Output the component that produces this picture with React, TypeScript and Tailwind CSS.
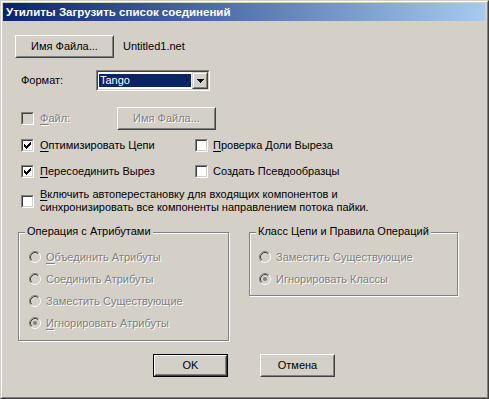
import React from "react";

const FACE = "bg-[#d4d0c8]";

function Btn({
  children,
  w,
  def,
  disabled,
}: {
  children: React.ReactNode;
  w: string;
  def?: boolean;
  disabled?: boolean;
}) {
  const inner = (
    <div className="h-full w-full border border-t-white border-l-white border-r-[#404040] border-b-[#404040]">
      <div className="h-full w-full border border-t-[#d4d0c8] border-l-[#d4d0c8] border-r-[#808080] border-b-[#808080] flex items-center justify-center">
        <span
          className={
            disabled
              ? "text-[#808080] [text-shadow:1px_1px_0_#ffffff] leading-[13px]"
              : "leading-[13px]"
          }
        >
          {children}
        </span>
      </div>
    </div>
  );
  if (def) {
    return (
      <div className={`${w} h-[23px] border border-black box-border`}>{inner}</div>
    );
  }
  return <div className={`${w} h-[23px]`}>{inner}</div>;
}

function Check({ checked, disabled }: { checked?: boolean; disabled?: boolean }) {
  return (
    <div className="w-[13px] h-[13px] shrink-0 border border-t-[#808080] border-l-[#808080] border-r-white border-b-white">
      <div
        className={`w-full h-full border border-t-[#404040] border-l-[#404040] border-r-[#d4d0c8] border-b-[#d4d0c8] ${
          disabled ? "bg-[#d4d0c8]" : "bg-white"
        } flex items-center justify-center`}
      >
        {checked && (
          <svg width="7" height="7" viewBox="0 0 7 7" shapeRendering="crispEdges">
            <path
              d="M0 2h1v3H0z M1 3h1v3H1z M2 4h1v3H2z M3 3h1v3H3z M4 2h1v3H4z M5 1h1v3H5z M6 0h1v3H6z"
              fill="#000"
            />
          </svg>
        )}
      </div>
    </div>
  );
}

function Radio({ checked }: { checked?: boolean }) {
  return (
    <svg width="12" height="12" viewBox="0 0 12 12" className="shrink-0">
      <circle cx="6" cy="6" r="4.5" fill="#d4d0c8" />
      <path d="M2.11 9.89 A5.5 5.5 0 0 1 9.89 2.11" stroke="#808080" fill="none" strokeWidth="1" />
      <path d="M9.89 2.11 A5.5 5.5 0 0 1 2.11 9.89" stroke="#ffffff" fill="none" strokeWidth="1" />
      <path d="M2.82 9.18 A4.5 4.5 0 0 1 9.18 2.82" stroke="#404040" fill="none" strokeWidth="1" />
      <path d="M9.18 2.82 A4.5 4.5 0 0 1 2.82 9.18" stroke="#d4d0c8" fill="none" strokeWidth="1" />
      {checked && <circle cx="6" cy="6" r="2" fill="#808080" />}
    </svg>
  );
}

const DIS = "text-[#808080] [text-shadow:1px_1px_0_#ffffff]";
const U = "underline decoration-1 underline-offset-[2px]";

function RadioRow({ children, checked }: { children: React.ReactNode; checked?: boolean }) {
  return (
    <div className="h-[22px] flex items-center">
      <Radio checked={checked} />
      <span className={`ml-[5px] leading-[13px] ${DIS}`}>{children}</span>
    </div>
  );
}

function Group({
  title,
  w,
  pl,
  pb,
  children,
}: {
  title: string;
  w: string;
  pl: string;
  pb: string;
  children: React.ReactNode;
}) {
  return (
    <div
      className={`relative ${w} border border-[#808080] shadow-[1px_1px_0_#ffffff,inset_1px_1px_0_#ffffff] pt-[13px] ${pl} ${pb}`}
    >
      <span className={`absolute left-[6px] top-[-8px] px-[2px] ${FACE} leading-[13px] whitespace-nowrap`}>
        {title}
      </span>
      {children}
    </div>
  );
}

export default function App() {
  return (
    <div
      className={`w-[489px] h-[399px] border border-t-[#d4d0c8] border-l-[#d4d0c8] border-r-[#404040] border-b-[#404040] ${FACE} text-[11px] text-black font-['Liberation_Sans',Arial,sans-serif]`}
    >
      <div className="h-full flex flex-col border border-t-white border-l-white border-r-[#808080] border-b-[#808080] pt-[1px] pl-[1px] pr-[2px] pb-[2px]">
        {/* Title bar */}
        <div className="h-[18px] shrink-0 flex items-center pl-[3px] bg-[linear-gradient(to_right,#0a246a,#a6caf0)]">
          <span className="text-white font-bold text-[11.5px] leading-[13px] whitespace-nowrap">
            Утилиты Загрузить список соединений
          </span>
        </div>

        {/* Body */}
        <div className="flex flex-col flex-1">
          {/* Row 1 */}
          <div className="mt-[14px] ml-[12px] flex items-center">
            <Btn w="w-[99px]">Имя Файла...</Btn>
            <span className="ml-[9px] leading-[13px]">Untitled1.net</span>
          </div>

          {/* Row 2 */}
          <div className="mt-[12px] ml-[18px] flex items-center">
            <span className="w-[75px] leading-[13px]">Формат:</span>
            <div className="w-[114px] h-[21px] border border-t-[#808080] border-l-[#808080] border-r-white border-b-white">
              <div className="h-full w-full border border-t-[#404040] border-l-[#404040] border-r-[#d4d0c8] border-b-[#d4d0c8] bg-white flex">
                <div className="flex-1 py-[2px] pl-[1px] pr-[1px] flex">
                  <div className="flex-1 bg-[#0a246a] text-white flex items-center pl-[1px] leading-[13px]">
                    Tango
                  </div>
                </div>
                <div className="w-[16px] h-full border border-t-[#d4d0c8] border-l-[#d4d0c8] border-r-[#404040] border-b-[#404040] bg-[#d4d0c8]">
                  <div className="w-full h-full border border-t-white border-l-white border-r-[#808080] border-b-[#808080] flex items-center justify-center">
                    <svg width="7" height="4" viewBox="0 0 7 4" shapeRendering="crispEdges">
                      <path d="M0 0h7v1H0z M1 1h5v1H1z M2 2h3v1H2z M3 3h1v1H3z" fill="#000" />
                    </svg>
                  </div>
                </div>
              </div>
            </div>
          </div>

          {/* Row 3 */}
          <div className="mt-[16px] ml-[18px] flex items-center h-[23px]">
            <div className="w-[96px] flex items-center">
              <Check disabled />
              <span className={`ml-[6px] leading-[13px] ${DIS}`}>
                <span className={U}>Ф</span>айл:
              </span>
            </div>
            <Btn w="w-[99px]" disabled>
              Имя Файла...
            </Btn>
          </div>

          {/* Row 4 */}
          <div className="mt-[9px] ml-[18px] flex items-center h-[13px]">
            <div className="w-[174px] flex items-center">
              <Check checked />
              <span className="ml-[6px] leading-[13px]">
                <span className={U}>О</span>птимизировать Цепи
              </span>
            </div>
            <div className="flex items-center">
              <Check />
              <span className="ml-[5px] leading-[13px]">
                <span className={U}>П</span>роверка Доли Выреза
              </span>
            </div>
          </div>

          {/* Row 5 */}
          <div className="mt-[13px] ml-[18px] flex items-center h-[13px]">
            <div className="w-[174px] flex items-center">
              <Check checked />
              <span className="ml-[6px] leading-[13px]">
                <span className={U}>П</span>ересоединить Вырез
              </span>
            </div>
            <div className="flex items-center">
              <Check />
              <span className="ml-[5px] leading-[13px]">Создать Псевдообразцы</span>
            </div>
          </div>

          {/* Row 6 */}
          <div className="mt-[10px] ml-[18px] flex items-center">
            <Check />
            <div className="ml-[6px] leading-[13px]">
              <div>
                <span className={U}>В</span>ключить автоперестановку для входящих компонентов и
              </div>
              <div>синхронизировать все компоненты направлением потока пайки.</div>
            </div>
          </div>

          {/* Groups */}
          <div className="mt-[18px] ml-[15px] flex items-start gap-[20px]">
            <Group title="Операция с Атрибутами" w="w-[211px]" pl="pl-[10px]" pb="pb-[6px]">
              <RadioRow>
                <span className={U}>О</span>бъединить Атрибуты
              </RadioRow>
              <RadioRow>Соединить Атрибуты</RadioRow>
              <RadioRow>Заместить Существующие</RadioRow>
              <RadioRow checked>
                <span className={U}>И</span>гнорировать Атрибуты
              </RadioRow>
            </Group>
            <Group title="Класс Цепи и Правила Операций" w="w-[209px]" pl="pl-[9px]" pb="pb-[5px]">
              <RadioRow>Заместить Существующие</RadioRow>
              <RadioRow checked>Игнорировать Классы</RadioRow>
            </Group>
          </div>

          {/* Buttons */}
          <div className="mt-[13px] flex justify-center gap-[32px]">
            <Btn w="w-[75px]" def>
              OK
            </Btn>
            <Btn w="w-[75px]">Отмена</Btn>
          </div>
        </div>
      </div>
    </div>
  );
}
